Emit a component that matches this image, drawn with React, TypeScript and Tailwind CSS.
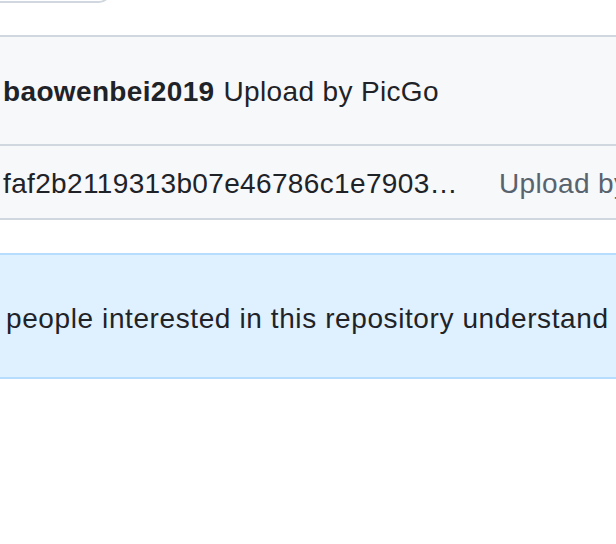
export default function App() {
  return (
    <div
      className="w-[616px] h-[544px] overflow-hidden bg-white text-[#1f2328] tracking-[0.35px]"
      style={{ fontFamily: '"Liberation Sans", Arial, sans-serif' }}
    >
      <div className="h-[35px] overflow-hidden">
        <div className="-mt-[40px] -ml-[20px] h-[43px] w-[131px] rounded-[12px] border-2 border-[#d0d7de] bg-white" />
      </div>

      <div className="border-y-2 border-[#d0d7de] bg-[#f6f8fa]">
        <div className="flex h-[107px] items-center whitespace-nowrap pl-[3px] pt-[3px] text-[28px] leading-[42px]">
          <span className="font-bold">baowenbei2019</span>
          <span className="ml-[9px]">Upload by PicGo</span>
        </div>
        <div className="flex h-[74px] items-center overflow-hidden whitespace-nowrap border-t-2 border-[#d0d7de] pl-[3px] pt-[3px] text-[28px] leading-[42px]">
          <span className="w-[455px] shrink-0">faf2b2119313b07e46786c1e7903…</span>
          <span className="ml-[41px] shrink-0 text-[#59636e]">Upload by PicGo</span>
        </div>
      </div>

      <div className="mt-[33px] flex h-[126px] items-center whitespace-nowrap border-y-2 border-[#b6dcfe] bg-[#dff1ff] pl-[6px] pt-[5px] text-[28px] leading-[42px] tracking-[0.6px]">
        people interested in this repository understand
      </div>
    </div>
  );
}
